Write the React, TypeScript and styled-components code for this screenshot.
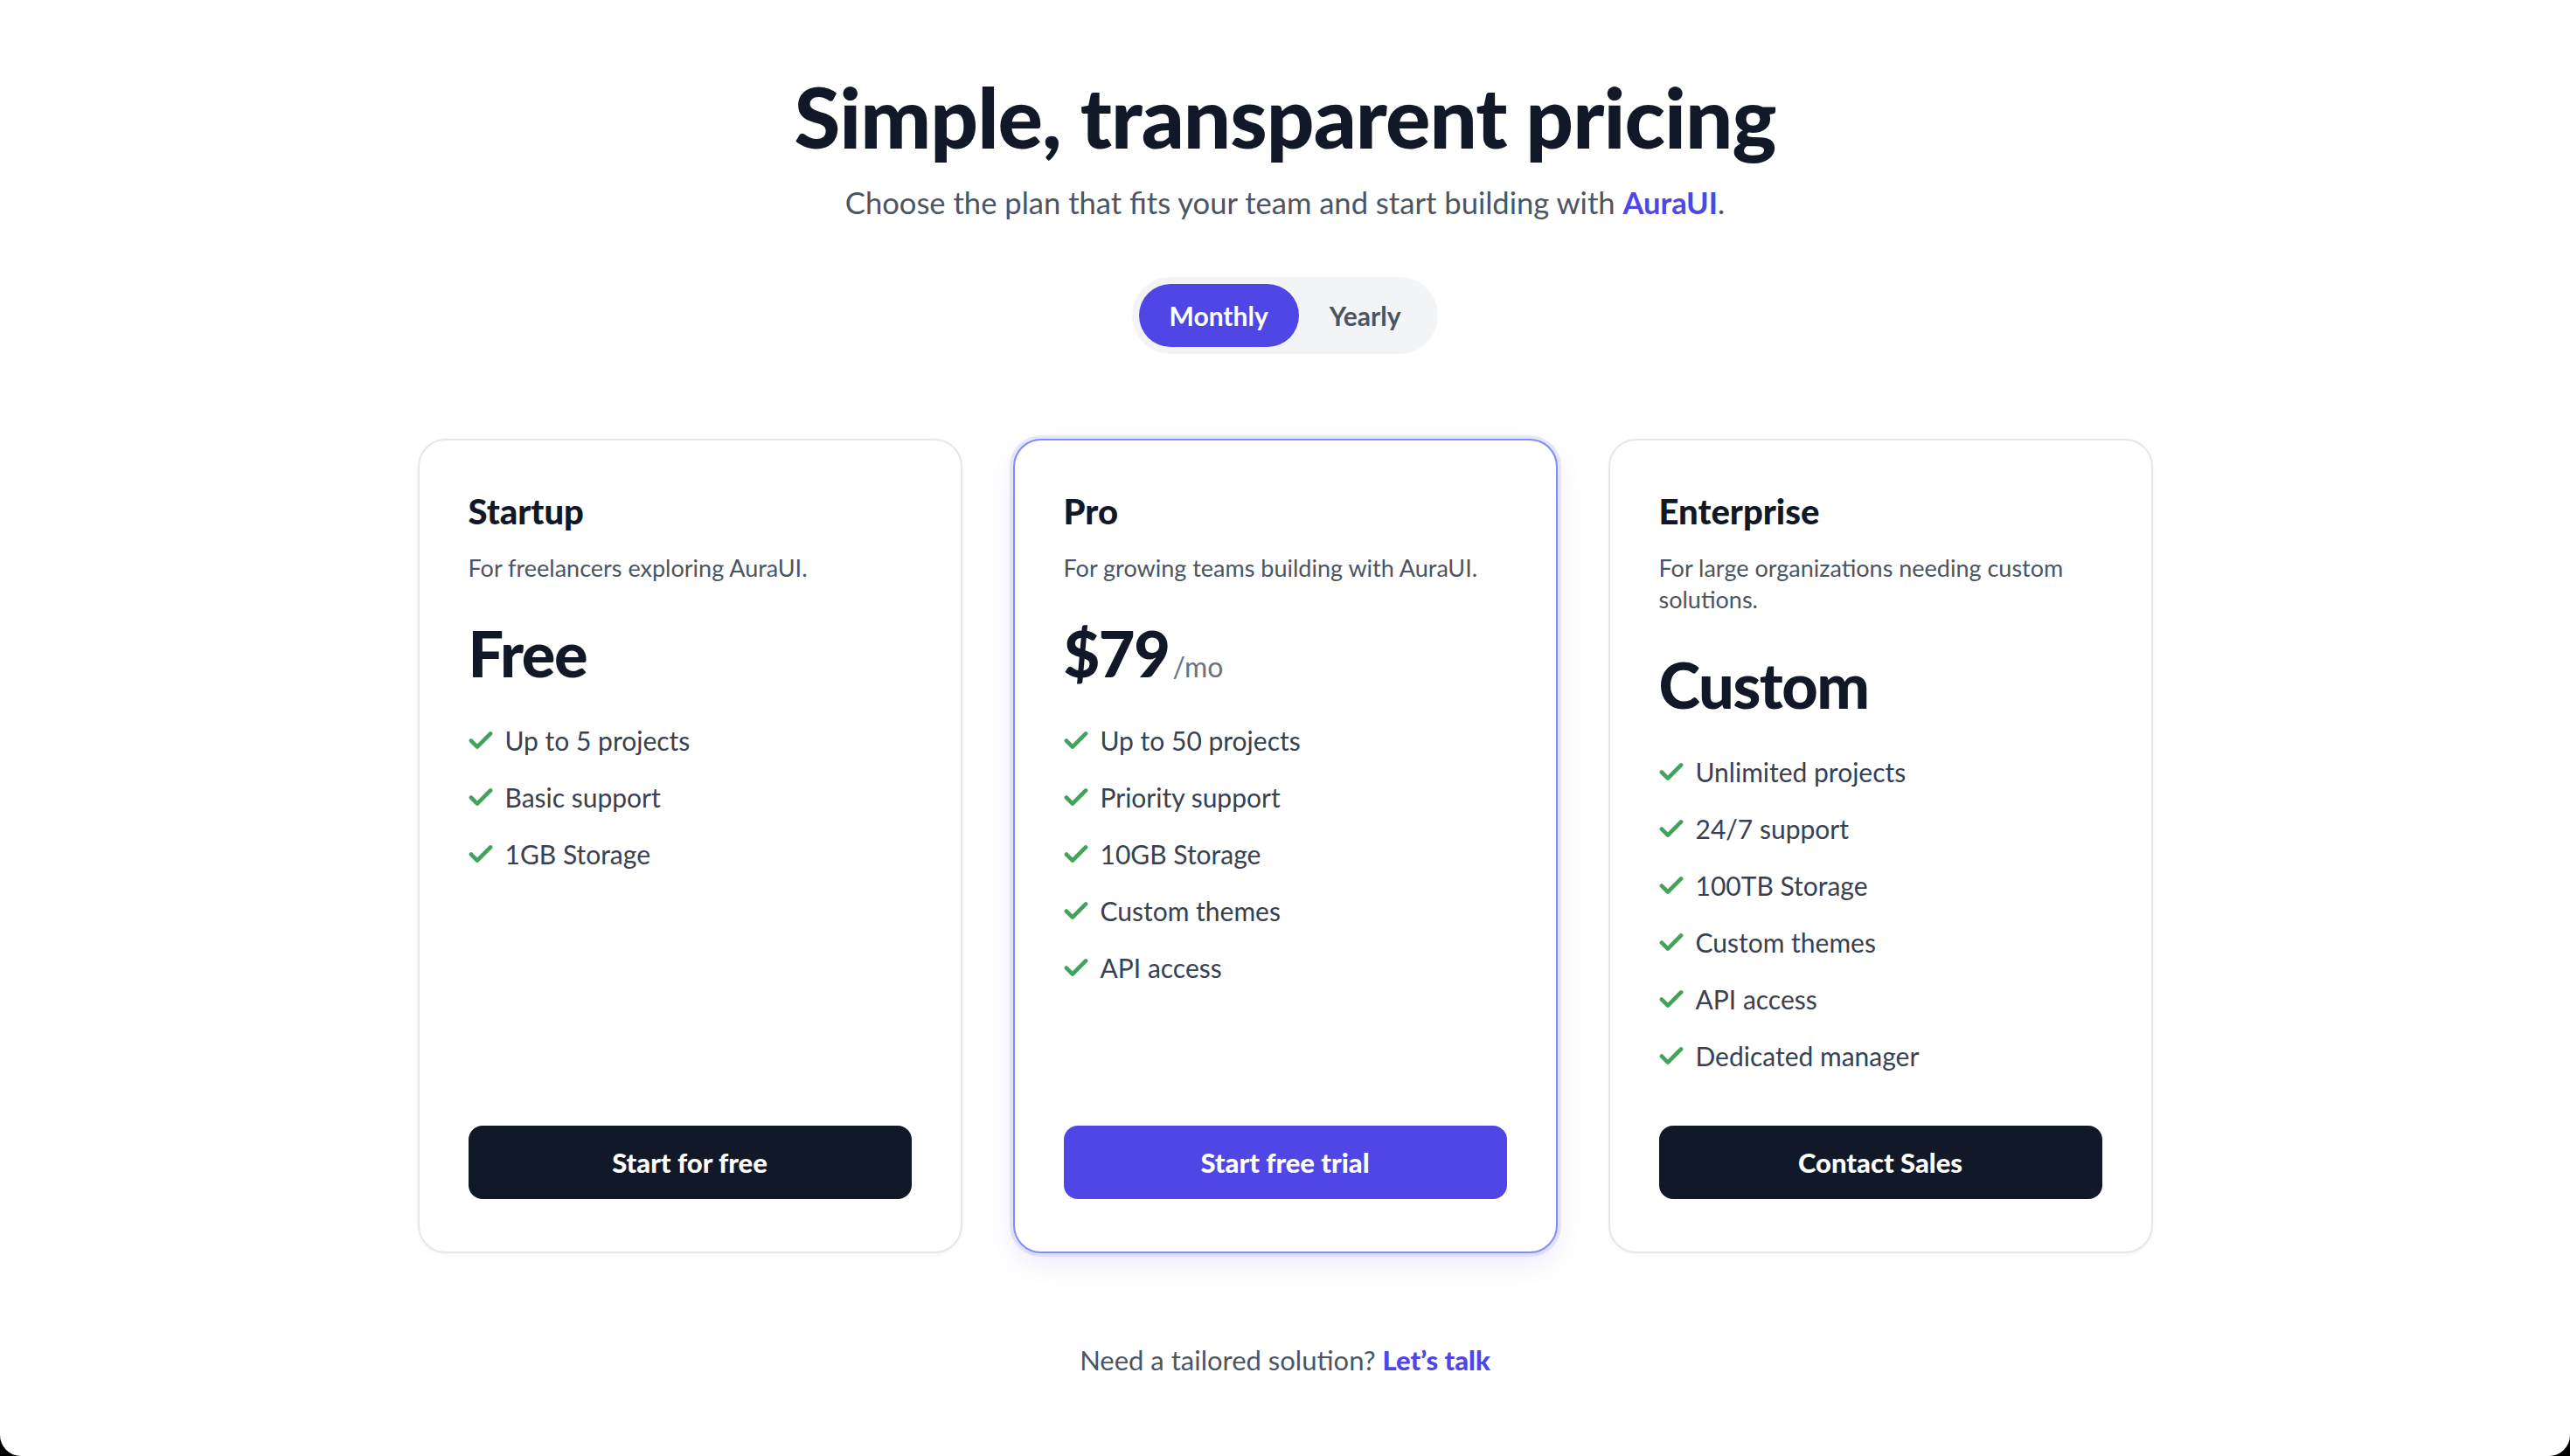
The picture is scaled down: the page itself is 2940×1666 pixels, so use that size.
import React, { useState } from "react";
import styled, { createGlobalStyle } from "styled-components";

const GlobalStyle = createGlobalStyle`
  html, body {
    margin: 0;
    padding: 0;
    background: #000;
  }
  * {
    box-sizing: border-box;
  }
  body {
    font-family: "Lato", "Noto Sans", sans-serif;
    -webkit-font-smoothing: antialiased;
  }
`;

const Page = styled.main`
  min-height: 1666px;
  background: #ffffff;
  border-radius: 0 0 24px 24px;
  display: flex;
  flex-direction: column;
  align-items: center;
  padding-top: 78px;
`;

const Title = styled.h1`
  margin: 0;
  font-size: 96px;
  line-height: 110px;
  font-weight: 900;
  letter-spacing: -0.01em;
  color: #111827;
`;

const Subtitle = styled.p`
  margin: 19px 0 0;
  font-size: 34.6px;
  line-height: 50px;
  color: #4b5563;
`;

const Brand = styled.span`
  font-weight: 700;
  color: #4f46e5;
`;

const Toggle = styled.div`
  margin-top: 60px;
  display: flex;
  padding: 8px;
  border-radius: 999px;
  background: #f3f4f6;
`;

const ToggleButton = styled.button<{ $active: boolean }>`
  height: 72px;
  padding: 0 35px;
  border: none;
  border-radius: 999px;
  font-family: inherit;
  font-size: 30px;
  font-weight: 700;
  cursor: pointer;
  color: ${(p) => (p.$active ? "#ffffff" : "#4b5563")};
  background: ${(p) => (p.$active ? "#4f46e5" : "transparent")};
`;

const Grid = styled.div`
  margin-top: 97px;
  display: grid;
  grid-template-columns: repeat(3, 623px);
  gap: 58px;
`;

const Card = styled.div<{ $featured: boolean }>`
  display: flex;
  flex-direction: column;
  height: 932px;
  padding: 54px 56px 60px;
  border-radius: 32px;
  background: #ffffff;
  border: 2px solid ${(p) => (p.$featured ? "#818cf8" : "#e5e7eb")};
  box-shadow: ${(p) =>
    p.$featured
      ? "0 0 0 4px rgba(129, 140, 248, 0.18), 0 12px 28px rgba(99, 102, 241, 0.12)"
      : "0 2px 4px rgba(17, 24, 39, 0.04)"};
`;

const PlanName = styled.h3`
  margin: 0;
  font-size: 40px;
  line-height: 54px;
  font-weight: 900;
  color: #111827;
`;

const PlanDesc = styled.p`
  margin: 20px 0 0;
  font-size: 27px;
  line-height: 36px;
  color: #4b5563;
`;

const PriceRow = styled.div`
  margin-top: 39px;
  display: flex;
  align-items: baseline;
  gap: 4px;
`;

const Price = styled.span`
  font-size: 72px;
  line-height: 80px;
  font-weight: 900;
  letter-spacing: -0.02em;
  color: #111827;
`;

const Period = styled.span`
  font-size: 32px;
  color: #6b7280;
`;

const Features = styled.ul`
  list-style: none;
  margin: 38px 0 0;
  padding: 0;
  display: flex;
  flex-direction: column;
  gap: 21px;
`;

const Feature = styled.li`
  display: flex;
  align-items: center;
  gap: 14px;
  font-size: 30px;
  line-height: 44px;
  color: #374151;
`;

const CheckMark = styled.svg`
  flex: none;
  width: 28px;
  height: 28px;
  color: #43a35a;
`;

const ActionButton = styled.button<{ $primary: boolean }>`
  margin-top: auto;
  height: 84px;
  width: 100%;
  border: none;
  border-radius: 16px;
  font-family: inherit;
  font-size: 31px;
  font-weight: 900;
  color: #ffffff;
  cursor: pointer;
  background: ${(p) => (p.$primary ? "#4f46e5" : "#111827")};
`;

const Footer = styled.p`
  margin: 100px 0 0;
  font-size: 31px;
  line-height: 44px;
  color: #4b5563;
`;

const FooterLink = styled.a`
  font-weight: 900;
  color: #4f46e5;
  text-decoration: none;
`;

type Plan = {
  name: string;
  desc: string;
  price: string;
  period?: string;
  features: string[];
  cta: string;
  featured?: boolean;
};

const plans: Plan[] = [
  {
    name: "Startup",
    desc: "For freelancers exploring AuraUI.",
    price: "Free",
    features: ["Up to 5 projects", "Basic support", "1GB Storage"],
    cta: "Start for free",
  },
  {
    name: "Pro",
    desc: "For growing teams building with AuraUI.",
    price: "$79",
    period: "/mo",
    features: ["Up to 50 projects", "Priority support", "10GB Storage", "Custom themes", "API access"],
    cta: "Start free trial",
    featured: true,
  },
  {
    name: "Enterprise",
    desc: "For large organizations needing custom solutions.",
    price: "Custom",
    features: [
      "Unlimited projects",
      "24/7 support",
      "100TB Storage",
      "Custom themes",
      "API access",
      "Dedicated manager",
    ],
    cta: "Contact Sales",
  },
];

const CheckIcon = () => (
  <CheckMark viewBox="0 0 24 24" fill="none">
    <path
      d="M2.5 12.5 8.5 18.5 21.5 5.5"
      stroke="currentColor"
      strokeWidth={4}
      strokeLinecap="round"
      strokeLinejoin="round"
    />
  </CheckMark>
);

export default function App() {
  const [billing, setBilling] = useState<"monthly" | "yearly">("monthly");

  return (
    <>
      <GlobalStyle />
      <Page>
        <Title>Simple, transparent pricing</Title>
        <Subtitle>
          Choose the plan that fits your team and start building with <Brand>AuraUI</Brand>.
        </Subtitle>

        <Toggle>
          <ToggleButton $active={billing === "monthly"} onClick={() => setBilling("monthly")}>
            Monthly
          </ToggleButton>
          <ToggleButton $active={billing === "yearly"} onClick={() => setBilling("yearly")}>
            Yearly
          </ToggleButton>
        </Toggle>

        <Grid>
          {plans.map((plan) => (
            <Card key={plan.name} $featured={!!plan.featured}>
              <PlanName>{plan.name}</PlanName>
              <PlanDesc>{plan.desc}</PlanDesc>
              <PriceRow>
                <Price>{plan.price}</Price>
                {plan.period && <Period>{plan.period}</Period>}
              </PriceRow>
              <Features>
                {plan.features.map((f) => (
                  <Feature key={f}>
                    <CheckIcon />
                    {f}
                  </Feature>
                ))}
              </Features>
              <ActionButton $primary={!!plan.featured}>{plan.cta}</ActionButton>
            </Card>
          ))}
        </Grid>

        <Footer>
          Need a tailored solution? <FooterLink href="#">Let’s talk</FooterLink>
        </Footer>
      </Page>
    </>
  );
}
